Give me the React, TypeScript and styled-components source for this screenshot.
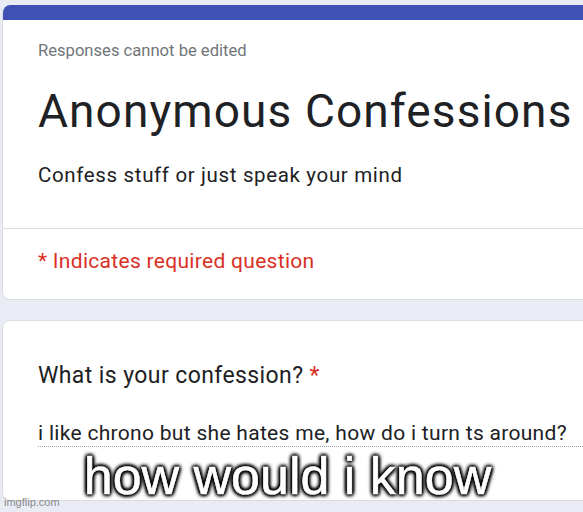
import styled, { createGlobalStyle } from 'styled-components';

const GlobalStyle = createGlobalStyle`
  html, body {
    margin: 0;
    padding: 0;
    background: #eaecf5;
    overflow: hidden;
  }
  body {
    font-family: Roboto, "Noto Sans", Arial, sans-serif;
  }
`;

const Page = styled.div`
  position: relative;
  width: 583px;
  height: 512px;
  overflow: hidden;
  background: #eaecf5;
  padding: 5px 0 0 2px;
  box-sizing: border-box;
  display: flex;
  flex-direction: column;
  gap: 20px;
`;

const Card = styled.div<{ $banner?: boolean }>`
  width: 660px;
  flex-shrink: 0;
  background: #fff;
  border: 1px solid #dadce0;
  border-top: ${p => (p.$banner ? 'none' : '1px solid #dadce0')};
  border-radius: 8px;
  overflow: hidden;
  box-sizing: border-box;
`;

const Banner = styled.div`
  height: 15px;
  background: #3f51b5;
`;

const Section = styled.div<{ $pad: string }>`
  padding: ${p => p.$pad};
`;

const Divider = styled.div`
  height: 1px;
  background: #dadce0;
`;

const Notice = styled.div`
  font-size: 16.6px;
  line-height: 24px;
  color: #70757a;
`;

const Title = styled.h1`
  margin: 20px 0 0;
  font-size: 46px;
  line-height: 56px;
  letter-spacing: 1.1px;
  font-weight: 400;
  color: #202124;
  white-space: nowrap;
`;

const Description = styled.div`
  margin-top: 22px;
  font-size: 20.5px;
  line-height: 28px;
  letter-spacing: 0.65px;
  color: #202124;
`;

const Required = styled.div`
  font-size: 21px;
  line-height: 28px;
  letter-spacing: 0.3px;
  color: #d93025;
`;

const Question = styled.div`
  font-size: 23px;
  line-height: 30px;
  letter-spacing: 0.4px;
  color: #202124;
`;

const Star = styled.span`
  color: #d93025;
`;

const Answer = styled.div`
  margin-top: 29px;
  font-size: 21px;
  line-height: 26px;
  letter-spacing: 0.3px;
  color: #202124;
  white-space: nowrap;
  border-bottom: 1px dotted #9aa0a6;
`;

const Caption = styled.div`
  position: absolute;
  top: 450px;
  left: 0;
  width: 575px;
  text-align: center;
  font-family: "Liberation Sans", Arial, sans-serif;
  font-size: 52px;
  line-height: 52px;
  color: #fff;
  -webkit-text-stroke: 0.6px #fff;
  text-shadow:
    0 0 2px #000,
    0 0 3px #000,
    0 0 4px #000,
    1px 1px 4px #000,
    -1px -1px 4px #000,
    1px -1px 4px #000,
    -1px 1px 4px #000;
`;

const Watermark = styled.div`
  position: absolute;
  left: 4px;
  top: 496px;
  font-family: "Liberation Sans", Arial, sans-serif;
  font-size: 11px;
  line-height: 12px;
  color: #888;
`;

export default function App() {
  return (
    <>
      <GlobalStyle />
      <Page>
        <Card $banner>
          <Banner />
          <Section $pad="19px 35px 39px">
            <Notice>Responses cannot be edited</Notice>
            <Title>Anonymous Confessions</Title>
            <Description>Confess stuff or just speak your mind</Description>
          </Section>
          <Divider />
          <Section $pad="18px 35px 24px">
            <Required>* Indicates required question</Required>
          </Section>
        </Card>
        <Card>
          <Section $pad="40px 0 53px 35px">
            <Question>
              What is your confession? <Star>*</Star>
            </Question>
            <Answer>i like chrono but she hates me, how do i turn ts around?</Answer>
          </Section>
        </Card>
        <Caption>how would i know</Caption>
        <Watermark>imgflip.com</Watermark>
      </Page>
    </>
  );
}
